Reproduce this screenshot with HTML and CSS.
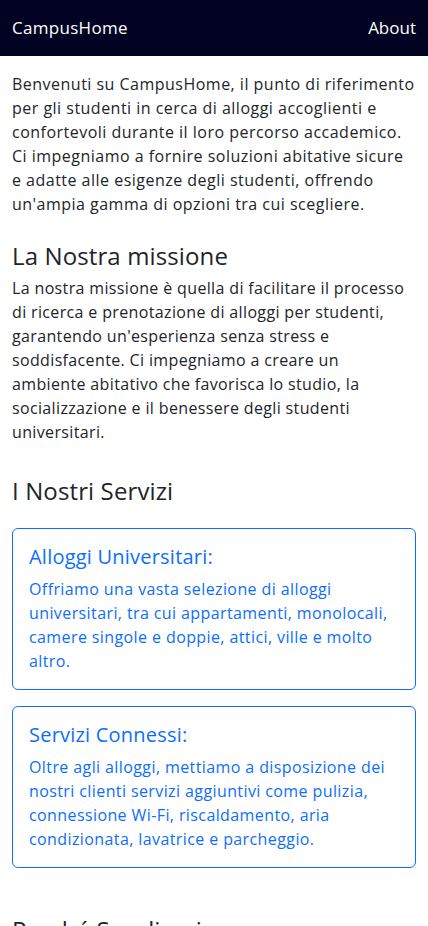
FILE: index.html
```html
<!DOCTYPE html>
<html lang="it">
<head>
<meta charset="utf-8">
<meta name="viewport" content="width=device-width, initial-scale=1">
<title>CampusHome</title>
<link rel="stylesheet" href="styles.css">
</head>
<body>
<nav class="navbar">
  <a class="brand" href="#">CampusHome</a>
  <a class="nav-link" href="#">About</a>
</nav>
<main class="container">
  <p class="intro">Benvenuti su CampusHome, il punto di riferimento per gli studenti in cerca di alloggi accoglienti e confortevoli durante il loro percorso accademico. Ci impegniamo a fornire soluzioni abitative sicure e adatte alle esigenze degli studenti, offrendo un'ampia gamma di opzioni tra cui scegliere.</p>

  <h2 class="section-title mission-title">La Nostra missione</h2>
  <p class="mission">La nostra missione è quella di facilitare il processo di ricerca e prenotazione di alloggi per studenti, garantendo un'esperienza senza stress e soddisfacente. Ci impegniamo a creare un ambiente abitativo che favorisca lo studio, la socializzazione e il benessere degli studenti universitari.</p>

  <h2 class="section-title services-title">I Nostri Servizi</h2>
  <div class="cards">
    <div class="card">
      <h3 class="card-title">Alloggi Universitari:</h3>
      <p class="card-text">Offriamo una vasta selezione di alloggi universitari, tra cui appartamenti, monolocali, camere singole e doppie, attici, ville e molto altro.</p>
    </div>
    <div class="card">
      <h3 class="card-title">Servizi Connessi:</h3>
      <p class="card-text">Oltre agli alloggi, mettiamo a disposizione dei nostri clienti servizi aggiuntivi come pulizia, connessione Wi-Fi, riscaldamento, aria condizionata, lavatrice e parcheggio.</p>
    </div>
  </div>

  <h2 class="section-title why-title">Perché Sceglierci</h2>
  <p class="why">Scegliere CampusHome significa affidarsi a un team di professionisti dedicati a rendere la vostra esperienza universitaria indimenticabile.</p>
</main>
</body>
</html>
```
FILE: styles.css
```css
* { box-sizing: border-box; }
html, body { margin: 0; padding: 0; }
body {
  font-family: "Open Sans", "Noto Sans", sans-serif;
  font-weight: 400;
  font-size: 16px;
  line-height: 24px;
  letter-spacing: 0.4px;
  color: #212529;
  background: #fff;
}
.navbar {
  height: 56px;
  background: #020322;
  display: flex;
  justify-content: space-between;
  align-items: center;
  padding: 0 12px;
}
.brand, .nav-link {
  color: #fff;
  text-decoration: none;
  font-size: 17px;
  letter-spacing: 0.3px;
}
.nav-link { letter-spacing: 0; }
.container { padding: 16px 12px 0; }
p { margin: 0; }
.intro { margin-bottom: 25px; letter-spacing: 0.485px; }
.mission { letter-spacing: 0.355px; }
.section-title {
  font-size: 24px;
  font-weight: 400;
  line-height: 29px;
  margin: 0;
  color: #212529;
  letter-spacing: 0.12px;
}
.mission-title { margin-bottom: 6px; }
.services-title { margin-top: 32px; margin-bottom: 23px; }
.cards { display: flex; flex-direction: column; gap: 16px; }
.card {
  border: 1px solid #0d6efd;
  border-radius: 6px;
  padding: 16px;
  color: #0d6efd;
}
.card-title {
  font-size: 20px;
  font-weight: 400;
  line-height: 24px;
  margin: 0 0 8px;
  letter-spacing: 0.22px;
}
.card-text { letter-spacing: 0.4px; }
.why-title { margin-top: 47px; }
.why { margin-top: 8px; }
```
